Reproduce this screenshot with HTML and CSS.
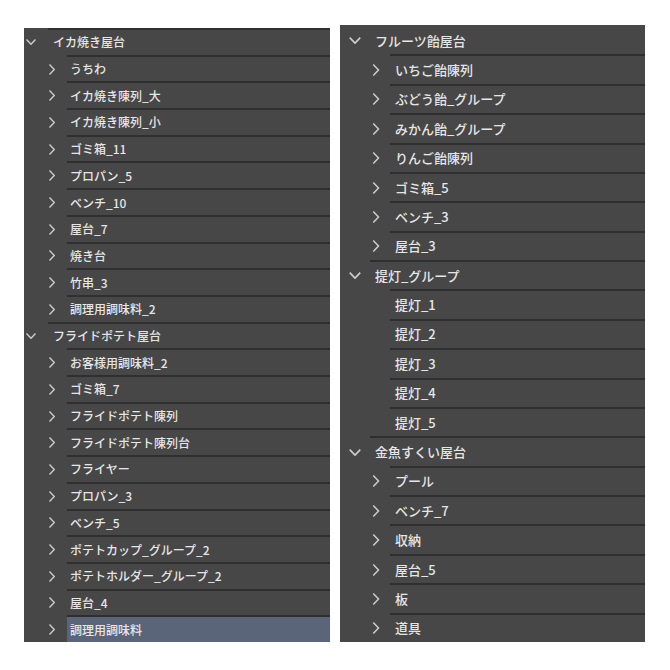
FILE: index.html
```html
<!DOCTYPE html>
<html lang="ja">
<head>
<meta charset="utf-8">
<link rel="stylesheet" href="styles.css">
</head>
<body>
<div class="wrap">
  <div class="panel left">
    <div class="row group"><span class="ic"><svg viewBox="0 0 10 6" class="down"><path d="M0.5 0.5 L5 5.3 L9.5 0.5"/></svg></span><span class="lbl">イカ焼き屋台</span></div>
    <div class="row child"><span class="ic"><svg viewBox="0 0 6 11" class="right"><path d="M0.5 0.5 L5.3 5.5 L0.5 10.5"/></svg></span><span class="lbl">うちわ</span></div>
    <div class="row child"><span class="ic"><svg viewBox="0 0 6 11" class="right"><path d="M0.5 0.5 L5.3 5.5 L0.5 10.5"/></svg></span><span class="lbl">イカ焼き陳列_大</span></div>
    <div class="row child"><span class="ic"><svg viewBox="0 0 6 11" class="right"><path d="M0.5 0.5 L5.3 5.5 L0.5 10.5"/></svg></span><span class="lbl">イカ焼き陳列_小</span></div>
    <div class="row child"><span class="ic"><svg viewBox="0 0 6 11" class="right"><path d="M0.5 0.5 L5.3 5.5 L0.5 10.5"/></svg></span><span class="lbl">ゴミ箱_11</span></div>
    <div class="row child"><span class="ic"><svg viewBox="0 0 6 11" class="right"><path d="M0.5 0.5 L5.3 5.5 L0.5 10.5"/></svg></span><span class="lbl">プロパン_5</span></div>
    <div class="row child"><span class="ic"><svg viewBox="0 0 6 11" class="right"><path d="M0.5 0.5 L5.3 5.5 L0.5 10.5"/></svg></span><span class="lbl">ベンチ_10</span></div>
    <div class="row child"><span class="ic"><svg viewBox="0 0 6 11" class="right"><path d="M0.5 0.5 L5.3 5.5 L0.5 10.5"/></svg></span><span class="lbl">屋台_7</span></div>
    <div class="row child"><span class="ic"><svg viewBox="0 0 6 11" class="right"><path d="M0.5 0.5 L5.3 5.5 L0.5 10.5"/></svg></span><span class="lbl">焼き台</span></div>
    <div class="row child"><span class="ic"><svg viewBox="0 0 6 11" class="right"><path d="M0.5 0.5 L5.3 5.5 L0.5 10.5"/></svg></span><span class="lbl">竹串_3</span></div>
    <div class="row child"><span class="ic"><svg viewBox="0 0 6 11" class="right"><path d="M0.5 0.5 L5.3 5.5 L0.5 10.5"/></svg></span><span class="lbl">調理用調味料_2</span></div>
    <div class="row group"><span class="ic"><svg viewBox="0 0 10 6" class="down"><path d="M0.5 0.5 L5 5.3 L9.5 0.5"/></svg></span><span class="lbl">フライドポテト屋台</span></div>
    <div class="row child"><span class="ic"><svg viewBox="0 0 6 11" class="right"><path d="M0.5 0.5 L5.3 5.5 L0.5 10.5"/></svg></span><span class="lbl">お客様用調味料_2</span></div>
    <div class="row child"><span class="ic"><svg viewBox="0 0 6 11" class="right"><path d="M0.5 0.5 L5.3 5.5 L0.5 10.5"/></svg></span><span class="lbl">ゴミ箱_7</span></div>
    <div class="row child"><span class="ic"><svg viewBox="0 0 6 11" class="right"><path d="M0.5 0.5 L5.3 5.5 L0.5 10.5"/></svg></span><span class="lbl">フライドポテト陳列</span></div>
    <div class="row child"><span class="ic"><svg viewBox="0 0 6 11" class="right"><path d="M0.5 0.5 L5.3 5.5 L0.5 10.5"/></svg></span><span class="lbl">フライドポテト陳列台</span></div>
    <div class="row child"><span class="ic"><svg viewBox="0 0 6 11" class="right"><path d="M0.5 0.5 L5.3 5.5 L0.5 10.5"/></svg></span><span class="lbl">フライヤー</span></div>
    <div class="row child"><span class="ic"><svg viewBox="0 0 6 11" class="right"><path d="M0.5 0.5 L5.3 5.5 L0.5 10.5"/></svg></span><span class="lbl">プロパン_3</span></div>
    <div class="row child"><span class="ic"><svg viewBox="0 0 6 11" class="right"><path d="M0.5 0.5 L5.3 5.5 L0.5 10.5"/></svg></span><span class="lbl">ベンチ_5</span></div>
    <div class="row child"><span class="ic"><svg viewBox="0 0 6 11" class="right"><path d="M0.5 0.5 L5.3 5.5 L0.5 10.5"/></svg></span><span class="lbl">ポテトカップ_グループ_2</span></div>
    <div class="row child"><span class="ic"><svg viewBox="0 0 6 11" class="right"><path d="M0.5 0.5 L5.3 5.5 L0.5 10.5"/></svg></span><span class="lbl">ポテトホルダー_グループ_2</span></div>
    <div class="row child"><span class="ic"><svg viewBox="0 0 6 11" class="right"><path d="M0.5 0.5 L5.3 5.5 L0.5 10.5"/></svg></span><span class="lbl">屋台_4</span></div>
    <div class="row child selected"><span class="ic"><svg viewBox="0 0 6 11" class="right"><path d="M0.5 0.5 L5.3 5.5 L0.5 10.5"/></svg></span><span class="lbl">調理用調味料</span></div>
  </div>
  <div class="panel right">
    <div class="row group"><span class="ic"><svg viewBox="0 0 10 6" class="down"><path d="M0.5 0.5 L5 5.3 L9.5 0.5"/></svg></span><span class="lbl">フルーツ飴屋台</span></div>
    <div class="row child"><span class="ic"><svg viewBox="0 0 6 11" class="right"><path d="M0.5 0.5 L5.3 5.5 L0.5 10.5"/></svg></span><span class="lbl">いちご飴陳列</span></div>
    <div class="row child"><span class="ic"><svg viewBox="0 0 6 11" class="right"><path d="M0.5 0.5 L5.3 5.5 L0.5 10.5"/></svg></span><span class="lbl">ぶどう飴_グループ</span></div>
    <div class="row child"><span class="ic"><svg viewBox="0 0 6 11" class="right"><path d="M0.5 0.5 L5.3 5.5 L0.5 10.5"/></svg></span><span class="lbl">みかん飴_グループ</span></div>
    <div class="row child"><span class="ic"><svg viewBox="0 0 6 11" class="right"><path d="M0.5 0.5 L5.3 5.5 L0.5 10.5"/></svg></span><span class="lbl">りんご飴陳列</span></div>
    <div class="row child"><span class="ic"><svg viewBox="0 0 6 11" class="right"><path d="M0.5 0.5 L5.3 5.5 L0.5 10.5"/></svg></span><span class="lbl">ゴミ箱_5</span></div>
    <div class="row child"><span class="ic"><svg viewBox="0 0 6 11" class="right"><path d="M0.5 0.5 L5.3 5.5 L0.5 10.5"/></svg></span><span class="lbl">ベンチ_3</span></div>
    <div class="row child"><span class="ic"><svg viewBox="0 0 6 11" class="right"><path d="M0.5 0.5 L5.3 5.5 L0.5 10.5"/></svg></span><span class="lbl">屋台_3</span></div>
    <div class="row group"><span class="ic"><svg viewBox="0 0 10 6" class="down"><path d="M0.5 0.5 L5 5.3 L9.5 0.5"/></svg></span><span class="lbl">提灯_グループ</span></div>
    <div class="row child"><span class="ic"></span><span class="lbl">提灯_1</span></div>
    <div class="row child"><span class="ic"></span><span class="lbl">提灯_2</span></div>
    <div class="row child"><span class="ic"></span><span class="lbl">提灯_3</span></div>
    <div class="row child"><span class="ic"></span><span class="lbl">提灯_4</span></div>
    <div class="row child"><span class="ic"></span><span class="lbl">提灯_5</span></div>
    <div class="row group"><span class="ic"><svg viewBox="0 0 10 6" class="down"><path d="M0.5 0.5 L5 5.3 L9.5 0.5"/></svg></span><span class="lbl">金魚すくい屋台</span></div>
    <div class="row child"><span class="ic"><svg viewBox="0 0 6 11" class="right"><path d="M0.5 0.5 L5.3 5.5 L0.5 10.5"/></svg></span><span class="lbl">プール</span></div>
    <div class="row child"><span class="ic"><svg viewBox="0 0 6 11" class="right"><path d="M0.5 0.5 L5.3 5.5 L0.5 10.5"/></svg></span><span class="lbl">ベンチ_7</span></div>
    <div class="row child"><span class="ic"><svg viewBox="0 0 6 11" class="right"><path d="M0.5 0.5 L5.3 5.5 L0.5 10.5"/></svg></span><span class="lbl">収納</span></div>
    <div class="row child"><span class="ic"><svg viewBox="0 0 6 11" class="right"><path d="M0.5 0.5 L5.3 5.5 L0.5 10.5"/></svg></span><span class="lbl">屋台_5</span></div>
    <div class="row child"><span class="ic"><svg viewBox="0 0 6 11" class="right"><path d="M0.5 0.5 L5.3 5.5 L0.5 10.5"/></svg></span><span class="lbl">板</span></div>
    <div class="row child"><span class="ic"><svg viewBox="0 0 6 11" class="right"><path d="M0.5 0.5 L5.3 5.5 L0.5 10.5"/></svg></span><span class="lbl">道具</span></div>
  </div>
</div>
</body>
</html>
```

FILE: styles.css
```css
html, body {
  margin: 0;
  padding: 0;
  background: #ffffff;
}
.wrap {
  display: flex;
  align-items: flex-start;
  gap: 10px;
  padding: 28px 0 0 24px;
  font-family: "Noto Sans CJK JP", "Noto Sans", sans-serif;
  font-weight: 500;
  color: #e6e6e6;
}
.panel {
  background: #474747;
  display: grid;
}
.panel.left {
  width: 306px;
  height: 614px;
  grid-template-rows: repeat(23, 1fr);
  font-size: 12px;
}
.panel.right {
  width: 305px;
  height: 617px;
  margin-top: -3px;
  grid-template-rows: repeat(21, 1fr);
  font-size: 13px;
}
.row {
  display: flex;
  min-height: 0;
}
.ic {
  display: flex;
  align-items: center;
  flex: none;
  box-sizing: border-box;
  padding-top: 2px;
}
.lbl {
  flex: 1;
  display: flex;
  align-items: center;
  border-top: 2px solid #2f2f2f;
  box-sizing: border-box;
  white-space: nowrap;
  padding-bottom: 1px;
}
svg {
  display: block;
  fill: none;
  stroke: #cccccc;
  stroke-width: 1.4;
}
/* left panel geometry */
.left .group .ic { width: 24px; padding-left: 2px; }
.left .group .lbl { padding-left: 5px; }
.left .child .ic { width: 43px; padding-left: 25px; }
.left .child .lbl { padding-left: 3px; }
.left svg.down { width: 10px; height: 6px; }
.left svg.right { width: 6px; height: 11px; }
/* right panel geometry */
.right .group .ic { width: 30px; padding-left: 8px; }
.right .group .lbl { padding-left: 5px; }
.right .child .ic { width: 50px; padding-left: 32px; }
.right .child .lbl { padding-left: 5px; }
.right svg.down { width: 14px; height: 7px; }
.right svg.right { width: 8px; height: 12px; }
.right .row:first-child .lbl { border-top-color: transparent; }
.selected .lbl {
  background: #5b6579;
}
```
